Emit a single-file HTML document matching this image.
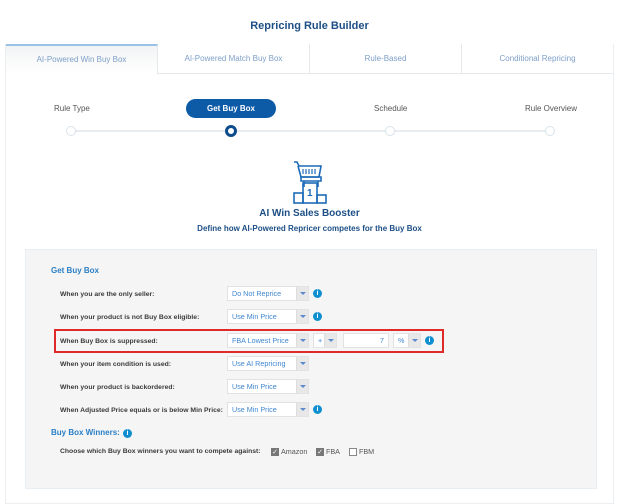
<!DOCTYPE html>
<html><head><meta charset="utf-8"><style>
*{box-sizing:border-box;margin:0;padding:0}
body{width:619px;height:484px;overflow:hidden;background:#fff;font-family:"Liberation Sans",sans-serif;position:relative}
.a{position:absolute;white-space:nowrap}
.title{left:0;width:619px;text-align:center;top:20px;font-size:11px;font-weight:bold;color:#1d4f86}
.card{left:5px;top:44px;width:609px;height:460px;border:1px solid #eceff2;background:#fff}
.tab{top:44px;height:30px;width:152px;font-size:8px;color:#7d9fc8;text-align:center;line-height:30px;border-right:1px solid #e6e9ec;border-bottom:1px solid #e6e9ec;background:#fff}
.tab.act{background:linear-gradient(#f2f3f4,#fff);border-top:2px solid #9cc1e6;border-bottom:none;line-height:28px}
.st{font-size:8px;color:#555;top:104px}
.pill{left:186px;top:99px;width:90px;height:19px;border-radius:10px;background:#0d5aa7;color:#fff;font-weight:bold;font-size:8px;text-align:center;line-height:19px}
.line{top:130px;left:71px;width:479px;height:2px;background:#e6ecf0}
.dot{top:126px;width:10px;height:10px;border-radius:50%;border:1.5px solid #d9e3ea;background:#fff}
.panel{left:25px;top:249px;width:572px;height:240px;background:#f5f5f5;border:1px solid #e9eef3}
.lbl{left:60px;font-size:6.8px;font-weight:bold;color:#3a3a3a}
.sel{height:15px;background:#fff;border:1px solid #e2e2e2;font-size:7.2px;color:#3f86d0;padding-left:4px;line-height:13px}
.sel i{position:absolute;right:0;top:0;width:12px;height:13px;background:#e8e8e8;border-left:1px solid #ddd}
.sel i:after{content:"";position:absolute;left:3px;top:5px;border:3px solid transparent;border-top:3px solid #5a8ccc}
.info{width:9px;height:9px;border-radius:50%;background:#0f8fd0;color:#fff;font-size:7px;font-weight:bold;text-align:center;line-height:9px}
.cb{width:8px;height:8px;border:1px solid #888;background:#fff;font-size:7px;line-height:7px;text-align:center;color:#fff}
.cb.on{background:#777;border-color:#777}
.ct{font-size:7.2px;color:#555}
</style></head><body>
<div class="a title">Repricing Rule Builder</div>
<div class="a card"></div>
<div class="a tab act" style="left:6px">AI-Powered Win Buy Box</div>
<div class="a tab" style="left:158px">AI-Powered Match Buy Box</div>
<div class="a tab" style="left:310px">Rule-Based</div>
<div class="a tab" style="left:462px;width:151px;border-right:none">Conditional Repricing</div>
<div class="a st" style="left:54px">Rule Type</div>
<div class="a pill">Get Buy Box</div>
<div class="a st" style="left:374px">Schedule</div>
<div class="a st" style="left:525px">Rule Overview</div>
<div class="a line"></div>
<div class="a dot" style="left:66px"></div>
<div class="a dot" style="left:225px;width:12px;height:12px;top:125px;border:3px solid #0d4c8c"></div>
<div class="a dot" style="left:385px"></div>
<div class="a dot" style="left:545px"></div>
<svg class="a" style="left:290px;top:158px" width="40" height="48" viewBox="0 0 40 48" fill="none" stroke="#1d6ab8" stroke-width="1.6">
<path d="M4 4h3l2 4h22l-2 11H11L8 8"/><path d="M13 11v5M16 11v5M19 11v5M22 11v5M25 11v5" stroke-width="1.2"/>
<path d="M11 19h20v4H11z"/><path d="M14 23v6M28 23v6"/>
<rect x="13" y="25" width="14" height="20"/><rect x="4" y="35" width="9" height="10"/><rect x="27" y="37" width="9" height="8"/>
<text x="17" y="38" font-size="10" font-weight="bold" fill="#1d6ab8" stroke="none" font-family="Liberation Sans">1</text></svg>
<div class="a" style="left:0;width:619px;text-align:center;top:208px;font-size:10px;font-weight:bold;color:#1d4f86">AI Win Sales Booster</div>
<div class="a" style="left:0;width:619px;text-align:center;top:224px;font-size:8px;font-weight:bold;color:#1d4f86">Define how AI-Powered Repricer competes for the Buy Box</div>
<div class="a panel"></div>
<div class="a" style="left:51px;top:266px;font-size:8px;font-weight:bold;color:#2a7fc6">Get Buy Box</div>

<div class="a lbl" style="top:291px">When you are the only seller:</div>
<div class="a sel" style="left:227px;top:286px;width:82px">Do Not Reprice<i></i></div>
<div class="a info" style="left:313px;top:289px">i</div>

<div class="a lbl" style="top:314px">When your product is not Buy Box eligible:</div>
<div class="a sel" style="left:227px;top:309px;width:82px">Use Min Price<i></i></div>
<div class="a info" style="left:313px;top:312px">i</div>

<div class="a" style="left:54px;top:329px;width:390px;height:24px;border:2px solid #e02a2a"></div>
<div class="a lbl" style="top:338px">When Buy Box is suppressed:</div>
<div class="a sel" style="left:227px;top:333px;width:82px">FBA Lowest Price<i></i></div>
<div class="a sel" style="left:313px;top:333px;width:24px">+<i></i></div>
<div class="a sel" style="left:343px;top:333px;width:46px;text-align:right;padding-right:4px">7</div>
<div class="a sel" style="left:393px;top:333px;width:28px">%<i></i></div>
<div class="a info" style="left:425px;top:336px">i</div>

<div class="a lbl" style="top:361px">When your item condition is used:</div>
<div class="a sel" style="left:227px;top:356px;width:82px">Use AI Repricing<i></i></div>

<div class="a lbl" style="top:384px">When your product is backordered:</div>
<div class="a sel" style="left:227px;top:379px;width:82px">Use Min Price<i></i></div>

<div class="a lbl" style="top:407px">When Adjusted Price equals or is below Min Price:</div>
<div class="a sel" style="left:227px;top:402px;width:82px">Use Min Price<i></i></div>
<div class="a info" style="left:313px;top:405px">i</div>

<div class="a" style="left:51px;top:428px;font-size:8px;font-weight:bold;color:#2a7fc6">Buy Box Winners:</div>
<div class="a info" style="left:123px;top:429px">i</div>
<div class="a lbl" style="top:448px">Choose which Buy Box winners you want to compete against:</div>
<div class="a cb on" style="left:271px;top:448px">✓</div><div class="a ct" style="left:281px;top:447px">Amazon</div>
<div class="a cb on" style="left:316px;top:448px">✓</div><div class="a ct" style="left:326px;top:447px">FBA</div>
<div class="a cb" style="left:349px;top:448px"></div><div class="a ct" style="left:359px;top:447px">FBM</div>
</body></html>
